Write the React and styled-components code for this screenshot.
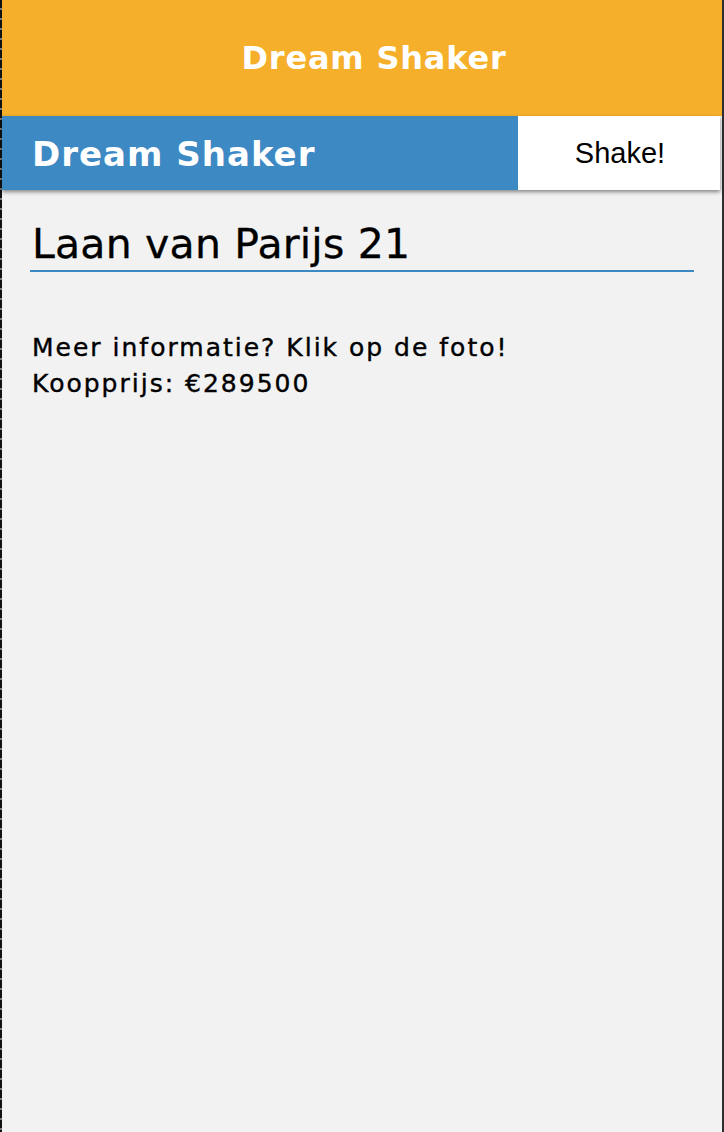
import styled, { createGlobalStyle } from "styled-components";

const orange = "#f6af2a";
const blue = "#3d89c4";

const GlobalStyle = createGlobalStyle`
  html, body {
    margin: 0;
    padding: 0;
    background: #f2f2f2;
  }
  * {
    box-sizing: border-box;
  }
`;

const Frame = styled.div`
  display: flex;
  min-height: 1132px;
`;

const EdgeLeft = styled.div`
  width: 2px;
  flex: none;
  background: repeating-linear-gradient(to bottom, #111 0 8px, #7a7a7a 8px 10px);
`;

const EdgeRight = styled.div`
  width: 2px;
  flex: none;
  background: #2e2e2e;
`;

const Screen = styled.div`
  flex: 1;
  display: flex;
  flex-direction: column;
  background: #f2f2f2;
  font-family: "DejaVu Sans", "Open Sans", sans-serif;
  color: #000;
`;

const AppBar = styled.header`
  height: 116px;
  background: ${orange};
  display: flex;
  align-items: center;
  justify-content: center;
  padding-left: 24px;
`;

const AppTitle = styled.h1`
  margin: 0;
  color: #fff;
  font-size: 32px;
  font-weight: 700;
  letter-spacing: 0.8px;
`;

const Nav = styled.nav`
  display: flex;
  height: 74px;
  margin-right: 2px;
  box-shadow: 0 2px 4px rgba(0, 0, 0, 0.45);
  position: relative;
`;

const Brand = styled.div`
  flex: 1;
  background: ${blue};
  color: #fff;
  display: flex;
  align-items: center;
  padding: 2px 0 0 30px;
  font-size: 34px;
  font-weight: 700;
  letter-spacing: 1px;
`;

const ShakeButton = styled.button`
  width: 202px;
  border: 0;
  background: #fff;
  color: #000;
  font-family: "Liberation Sans", Arial, sans-serif;
  font-size: 29px;
  padding: 0 0 0 2px;
  cursor: pointer;
`;

const Content = styled.main`
  padding: 28px 28px 0;
`;

const Address = styled.h2`
  margin: 0;
  font-size: 41px;
  font-weight: 400;
  line-height: 52px;
  padding-left: 2px;
  letter-spacing: 0.2px;
  -webkit-text-stroke: 0.3px #000;
  border-bottom: 2px solid ${blue};
`;

const Info = styled.p`
  margin: 58px 0 0;
  padding-left: 2px;
  font-size: 25px;
  line-height: 36px;
  letter-spacing: 2px;
  -webkit-text-stroke: 0.4px #000;
`;

export default function App() {
  return (
    <>
      <GlobalStyle />
      <Frame>
        <EdgeLeft />
        <Screen>
          <AppBar>
            <AppTitle>Dream Shaker</AppTitle>
          </AppBar>
          <Nav>
            <Brand>Dream Shaker</Brand>
            <ShakeButton>Shake!</ShakeButton>
          </Nav>
          <Content>
            <Address>Laan van Parijs 21</Address>
            <Info>
              Meer informatie? Klik op de foto!
              <br />
              Koopprijs: €289500
            </Info>
          </Content>
        </Screen>
        <EdgeRight />
      </Frame>
    </>
  );
}
